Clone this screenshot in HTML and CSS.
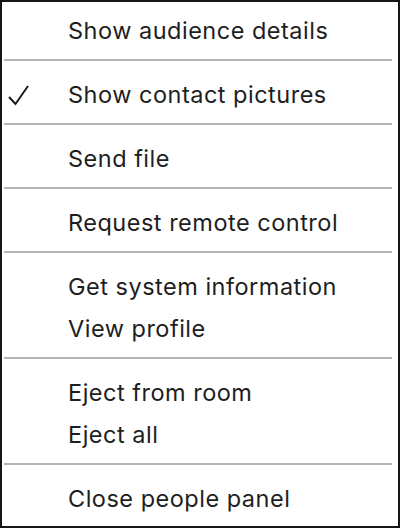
FILE: index.html
```html
<!DOCTYPE html>
<html>
<head>
<meta charset="utf-8">
<link rel="stylesheet" href="styles.css">
</head>
<body>
<div class="menu">
  <div class="item">Show audience details</div>
  <div class="sep"></div>
  <div class="item checked">
    <svg class="check" width="24" height="22" viewBox="0 0 24 22"><path d="M1 12 L7.5 19 L20 1" fill="none" stroke="#1a1a1a" stroke-width="2"/></svg>
    Show contact pictures
  </div>
  <div class="sep"></div>
  <div class="item">Send file</div>
  <div class="sep"></div>
  <div class="item">Request remote control</div>
  <div class="sep"></div>
  <div class="item">Get system information</div>
  <div class="item">View profile</div>
  <div class="sep"></div>
  <div class="item">Eject from room</div>
  <div class="item">Eject all</div>
  <div class="sep"></div>
  <div class="item">Close people panel</div>
</div>
</body>
</html>
```
FILE: styles.css
```css
html, body {
  margin: 0;
  padding: 0;
  background: #fff;
}
.menu {
  box-sizing: border-box;
  width: 400px;
  height: 528px;
  border: 2px solid #161616;
  background: #fff;
  padding-top: 9px;
  font-family: "Inter", "Liberation Sans", Arial, sans-serif;
  font-size: 23.5px;
  letter-spacing: 0.5px;
  color: #1e1e1e;
}
.item {
  position: relative;
  box-sizing: border-box;
  height: 42px;
  line-height: 40px;
  padding-bottom: 2px;
  padding-left: 66px;
}
.check {
  position: absolute;
  left: 6px;
  top: 10px;
}
.sep {
  height: 2px;
  background: #b4b4b4;
  margin: 6px 6px 14px 2px;
}
```
